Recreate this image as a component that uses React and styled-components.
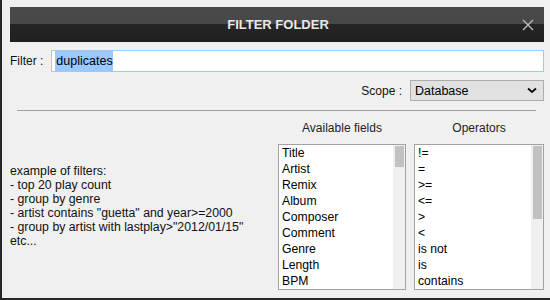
import styled, { createGlobalStyle } from 'styled-components'

const Global = createGlobalStyle`
    html, body {
        margin: 0;
        padding: 0;
        background: #262626;
    }
    body {
        font-family: 'Liberation Sans', Arial, sans-serif;
        font-size: 12px;
        color: #000;
    }
`

const Page = styled.div`
    width: 550px;
    height: 300px;
    box-sizing: border-box;
    padding: 0 0 2px 2px;
    background: #262626;
`

const Window = styled.div`
    height: 100%;
    background: #f0f0f0;
    display: flex;
    flex-direction: column;
`

const TitleBar = styled.div`
    margin: 7px 6px 0 8px;
    height: 35px;
    background: linear-gradient(to bottom, #4a4a4a 0, #474747 17px, #252525 17px, #202020 100%);
    display: flex;
    align-items: center;
    justify-content: center;
    position: relative;
`

const Title = styled.div`
    font-size: 13px;
    font-weight: 700;
    color: #e9e9e9;
    margin-left: 2px;
`

const Close = styled.svg`
    position: absolute;
    right: 10px;
    top: 12px;
`

const Row = styled.div`
    display: flex;
    align-items: center;
    justify-content: ${p => p.$end ? 'flex-end' : 'flex-start'};
    margin-top: 8px;
    padding: 0 6px 0 8px;
`

const Label = styled.span`
    color: #111;
    margin-right: 8px;
`

const Field = styled.div`
    flex: 1;
    height: 20px;
    border: 1px solid #9ccbf6;
    background: #fff;
    padding-left: 3px;
    display: flex;
`

const Selected = styled.span`
    background: #99c9fe;
    line-height: 20px;
    padding-left: 1px;
    font-size: 12.5px;
`

const Select = styled.div`
    width: 122px;
    height: 19px;
    border: 1px solid #adadad;
    background: #e1e1e1;
    display: flex;
    align-items: center;
    justify-content: space-between;
    padding: 0 6px 0 4px;
    font-size: 12.5px;
`

const Separator = styled.div`
    height: 1px;
    background: #a0a0a0;
    margin: 9px 14px 0 15px;
`

const Lower = styled.div`
    display: flex;
    padding: 0 6px 0 8px;
`

const Examples = styled.div`
    flex: 1;
    padding-top: 53px;
    line-height: 14px;
    font-size: 12.3px;
    color: #111;
`

const Columns = styled.div`
    display: flex;
    gap: 8px;
    margin-top: 9px;
`

const Column = styled.div`
    width: ${p => p.$w}px;
    display: flex;
    flex-direction: column;
`

const Heading = styled.div`
    text-align: center;
    line-height: 16px;
    height: 16px;
    margin-bottom: 8px;
    color: #222;
`

const ListBox = styled.div`
    height: 144px;
    border: 1px solid #a2a2a2;
    background: #fff;
    display: flex;
`

const Items = styled.div`
    flex: 1;
    padding-left: 3px;
`

const Item = styled.div`
    height: 16px;
    line-height: 16px;
    font-size: 12.2px;
`

const Track = styled.div`
    width: 12px;
    background: #f0f0f0;
    padding: 1px 1px 0 2px;
    box-sizing: border-box;
`

const Thumb = styled.div`
    height: ${p => p.$h}px;
    background: #c1c1c1;
`

const fields = ['Title', 'Artist', 'Remix', 'Album', 'Composer', 'Comment', 'Genre', 'Length', 'BPM']
const operators = ['!=', '=', '>=', '<=', '>', '<', 'is not', 'is', 'contains']

const List = ({ items, thumb }) => (
    <ListBox>
        <Items>
            {items.map(i => <Item key={i}>{i}</Item>)}
        </Items>
        <Track>
            <Thumb $h={thumb} />
        </Track>
    </ListBox>
)

const App = () => {
    return <Page>
        <Global />
        <Window>
            <TitleBar>
                <Title>FILTER FOLDER</Title>
                <Close width="12" height="12" viewBox="0 0 12 12">
                    <path d="M1 1 L11 11 M11 1 L1 11" stroke="#bdbdbd" strokeWidth="1.4" fill="none" />
                </Close>
            </TitleBar>
            <Row>
                <Label>Filter :</Label>
                <Field>
                    <Selected>duplicates</Selected>
                </Field>
            </Row>
            <Row $end>
                <Label>Scope :</Label>
                <Select>
                    <span>Database</span>
                    <svg width="10" height="7" viewBox="0 0 10 7">
                        <path d="M1 1.5 L5 5 L9 1.5" stroke="#111" strokeWidth="2" fill="none" />
                    </svg>
                </Select>
            </Row>
            <Separator />
            <Lower>
                <Examples>
                    example of filters:<br />
                    - top 20 play count<br />
                    - group by genre<br />
                    - artist contains "guetta" and year&gt;=2000<br />
                    - group by artist with lastplay&gt;"2012/01/15"<br />
                    etc...
                </Examples>
                <Columns>
                    <Column $w={128}>
                        <Heading>Available fields</Heading>
                        <List items={fields} thumb={21} />
                    </Column>
                    <Column $w={130}>
                        <Heading>Operators</Heading>
                        <List items={operators} thumb={73} />
                    </Column>
                </Columns>
            </Lower>
        </Window>
    </Page>
}

export default App
